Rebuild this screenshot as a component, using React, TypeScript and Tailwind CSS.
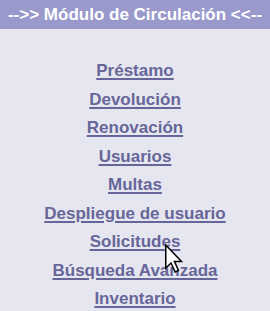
import React from 'react';

const LINKS = [
  'Préstamo',
  'Devolución',
  'Renovación',
  'Usuarios',
  'Multas',
  'Despliegue de usuario',
  'Solicitudes',
  'Búsqueda Avanzada',
  'Inventario',
];

export default function App() {
  return (
    <div className="relative w-[270px] h-[311px] overflow-hidden bg-[#e6e6f0] font-['Liberation_Sans',Arial,sans-serif]">
      {/* Header */}
      <div className="h-[29px] bg-[#9999cc] flex items-center justify-center">
        <span className="text-white font-bold text-[17px] leading-none whitespace-nowrap">
          --&gt;&gt; Módulo de Circulación &lt;&lt;--
        </span>
      </div>

      {/* Menu links */}
      <ul className="flex flex-col items-center pt-[28px]">
        {LINKS.map((label) => (
          <li key={label} className="leading-[28.5px]">
            <a href="#" className="text-[#666699] font-bold text-[17px] underline decoration-2 underline-offset-2 whitespace-nowrap">
              {label}
            </a>
          </li>
        ))}
      </ul>

      {/* Mouse cursor */}
      <svg
        className="absolute left-[165px] top-[244px]"
        width="18"
        height="29"
        viewBox="0 0 12 19"
      >
        <path
          d="M0.5 0.5 L0.5 16 L4 12.5 L6.8 18.5 L9 17.5 L6.3 11.5 L11 11.5 Z"
          fill="#ffffff"
          stroke="#000000"
          strokeWidth="1"
          strokeLinejoin="miter"
        />
      </svg>
    </div>
  );
}
